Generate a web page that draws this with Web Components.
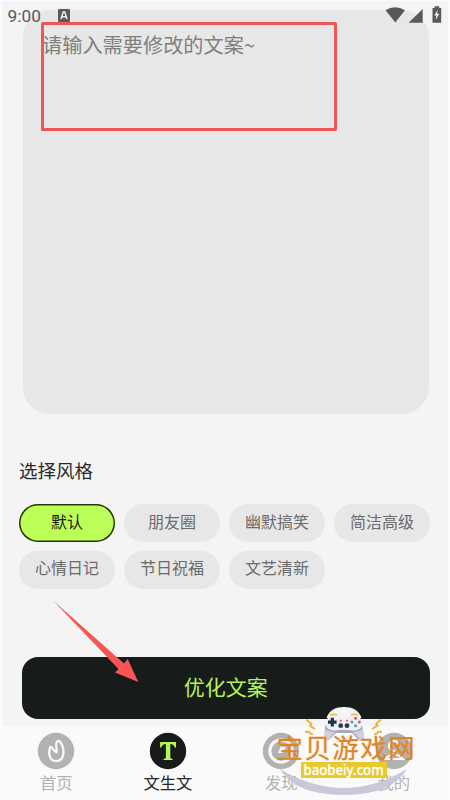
<!DOCTYPE html>
<html lang="zh-CN"><head><meta charset="utf-8"><title>文生文</title>
<style>html,body{margin:0;padding:0;overflow:hidden}body{font-family:"Noto Sans CJK SC","Noto Sans",sans-serif;width:450px;height:800px}</style></head>
<body><copy-app></copy-app>
<script>
const def=(name,html)=>{const t=document.createElement('template');t.innerHTML=html;
customElements.define(name,class extends HTMLElement{constructor(){super();this.attachShadow({mode:'open'}).append(t.content.cloneNode(true));}});};

def('status-bar',`<style>:host{display:flex;height:30px;align-items:center;box-sizing:border-box;padding:0 7px 0 7.6px;color:#595959;font:17.3px/30px Roboto,sans-serif}
.t{width:50.4px;height:30px;padding-top:1px}.s{flex:1}svg{display:block;flex:none}</style>
<span class="t">9:00</span><svg width="12" height="13" viewBox="0 0 12 13"><rect width="12" height="13" rx="1.2" fill="#595959"/><path d="M3 10 5.2 3h1.6L9 10M4.1 7.7h3.8" fill="none" stroke="#eee" stroke-width="1.5"/></svg><span class="s"></span>
<svg width="58" height="18" viewBox="0 0 58 18" fill="#595959"><path d="M.5 4.2Q10 -1.8 20 4.2L10.3 16.5Z"/><path d="M37.7 3V16.7H23.6Z"/><path d="M47.5 2h2V.3h4.7V2h2v14.7h-8.7Z"/><path d="m52.6 4-3.3 5.6h2l-.5 4.4 3.5-6.2h-2.1Z" fill="#eee"/></svg>`);

def('text-card',`<style>:host{display:block;box-sizing:border-box;height:404px;border-radius:27px;background:#e7e7e7;color:#7f7f7f;padding:20px 19px;font-size:20.2px;line-height:30px}</style><slot></slot>`);

def('style-chip',`<style>:host{display:flex;align-items:center;justify-content:center;box-sizing:border-box;height:38px;border-radius:19px;background:#e7e7e7;color:#6b6b6b;font-size:16px;line-height:24px;padding-bottom:5px}
:host([active]){background:#bdff59;color:#1a2010;box-shadow:inset 0 0 0 1.5px #26340f}</style><slot></slot>`);

def('primary-button',`<style>:host{display:flex;align-items:center;justify-content:center;height:62px;border-radius:16px;background:#171c1a;color:#b5f457;font-size:21px;line-height:30px;box-sizing:border-box;padding-bottom:4px}</style><slot></slot>`);

def('nav-item',`<style>:host{display:flex;flex-direction:column;align-items:center;width:112.6px;color:#b2b2b2;font-size:16.3px;line-height:24px;padding-top:6px;box-sizing:border-box}
:host([active]){color:#252827;padding-right:1.6px}::slotted(svg){display:block;width:38px;height:38px}</style><slot name="icon"></slot><span><slot></slot></span>`);

def('site-mark',`<style>:host{display:block;width:142px;height:92px;position:relative;color:#e1851f}
svg{position:absolute;inset:0}.n{position:absolute;left:1.6px;top:29px;font-size:26.4px;letter-spacing:1.5px;line-height:26px;white-space:nowrap;-webkit-text-stroke:.3px}
.u{position:absolute;left:26px;top:57px;width:86px;height:16px;background:#e8ca2e;color:#fff;display:flex;justify-content:center;align-items:center;white-space:nowrap}
.u b{flex:none;font:500 15px/14px "Noto Sans",sans-serif;transform:translateY(-1px) scaleX(.88);margin:0 -6px;-webkit-text-stroke:.25px}</style>
<svg width="142" height="92" viewBox="0 0 142 92"><path d="M5 64Q69 102 132 64Q117 90 69 90Q20 90 5 64Z" fill="#c7c8d8"/>
<path d="M51.5 13C54 5 61 2 69 2S84 5 86.5 13Z" fill="#f4f4f4"/>
<path d="M50.5 20Q49 29 50 34Q53 37 58 31L61 28H77L80 31Q85 38 88.5 34Q89 28 87 20Z" fill="#a9a9ba"/>
<path d="M57 34Q62 28 69 28T81 34Z" fill="#fafafa"/>
<path d="M51 19Q51 12 57 11Q61 11 63 13H75Q77 11 81 11Q87 12 87 19Q87 24 82 25Q78 26 75 25H63Q60 26 56 25Q51 24 51 19Z" fill="#eeeef3"/>
<path d="M50.5 24Q49 32 50 35Q53 38 56 32L60 27Q53 27 50.5 24M87.5 24Q90 32 89 35Q86 38 83 32L78 27Q85 27 87.5 24" fill="#d0d0dc"/>
<path d="M57.3 12.8v8.6M53 17.1h8.6" stroke="#193643" stroke-width="3.2"/>
<g fill="#263d4a"><circle cx="65.7" cy="20.7" r="2.4"/><circle cx="72" cy="20.7" r="2.4"/></g><g fill="#dd5260"><circle cx="65.7" cy="15.7" r="1"/><circle cx="72" cy="15.7" r="1"/><circle cx="80.6" cy="13.3" r="1.5"/><circle cx="84.3" cy="17" r="1.5"/></g><g fill="#38a3cc"><circle cx="76.9" cy="17" r="1.5"/><circle cx="80.6" cy="20.7" r="1.5"/></g>
<path d="M55 10.5q4-2 7-.5M76 10q4-1.5 7 .5" fill="none" stroke="#e9b64b" stroke-width="1.5"/>
<g fill="none" stroke="#efaf3c" stroke-width="1.8"><path d="m31.5 14.5 5 4.5-1.5 1.8 5 3.2M30 27l4-.3.8 1.6 3.2 1M106 14.5l-5 4.5 1.5 1.5-5.5 3.5M107 27l-4-.3-.8 1.6-3.2 1"/></g></svg>
<span class="n">宝贝游戏网</span><span class="u"><b>baobeiy.com</b></span>`);

def('mark-overlay',`<style>:host{display:block;position:absolute;top:0;left:-2px;width:450px;height:800px;pointer-events:none}svg{display:block}site-mark{position:absolute;left:275px;top:705px}</style>
<svg width="450" height="800"><rect x="42.5" y="23.5" width="293" height="106" fill="none" stroke="#ec5656" stroke-width="3" stroke-linejoin="round"/><path d="M53 600.5 124 663.5 127.7 659 138.3 682 115 672.5 118.5 669Z" fill="#f95555"/></svg><site-mark></site-mark>`);

def('copy-app',`<style>:host{display:flex;flex-direction:column;position:relative;width:450px;height:800px;background:#f4f4f4;overflow:hidden;box-sizing:border-box;border-left:2px solid #fcfcfc;border-right:2px solid #fcfcfc}
:host::before{content:"";position:absolute;left:0;right:0;top:0;height:1px;background:#fcfcfc}
status-bar{position:absolute;left:-2px;right:-2px;top:0}
main{flex:1;display:flex;flex-direction:column;padding:9.5px 0 0}
text-card{margin:0 19px 0 21px}h2{font-size:18.5px;font-weight:400;line-height:28px;color:#292929;margin:42px 0 0 17px}
.chips{display:grid;grid-template-columns:repeat(4,1fr);gap:8.5px 9.3px;margin:20.5px 18px 0 17px}primary-button{margin:68.5px 18.5px 0 20px}
nav{height:74px;background:#fafafa;display:flex;justify-content:space-between;margin:0 -2px}</style>
<main><text-card>请输入需要修改的文案~</text-card><h2>选择风格</h2>
<section class="chips"><style-chip active>默认</style-chip><style-chip>朋友圈</style-chip><style-chip>幽默搞笑</style-chip><style-chip>简洁高级</style-chip><style-chip>心情日记</style-chip><style-chip>节日祝福</style-chip><style-chip>文艺清新</style-chip></section>
<primary-button>优化文案</primary-button></main>
<nav><nav-item><svg slot="icon" viewBox="0 0 38 38"><circle cx="19" cy="19" r="18.2" fill="#b2b2b2"/><path d="M13.2 15C11 21 12 29 19.3 29.2 28 29 28.5 16 22.5 9 20.5 8.5 18.8 10.5 19.2 13.5Q19.8 17 19.7 20.5 17.5 19.5 16 17 14.5 14.5 13.2 15Z" fill="none" stroke="#fafafa" stroke-width="2.2" stroke-linejoin="round"/></svg>首页</nav-item>
<nav-item active><svg slot="icon" viewBox="0 0 38 38"><circle cx="19" cy="19" r="18.2" fill="#171c1a"/><path d="M11.1 10H27V15.5H25.7Q25 12 21.3 12V25.5Q21.3 26.7 23.6 27V28H14.5V27Q16.9 26.7 16.9 25.5V12Q13 12 12.4 15.5H11.1Z" fill="#b5f457"/></svg>文生文</nav-item>
<nav-item><svg slot="icon" viewBox="0 0 38 38"><circle cx="19" cy="19" r="18.2" fill="#b2b2b2"/><circle cx="19" cy="19" r="11.2" fill="none" stroke="#fafafa" stroke-width="3"/><path d="m16 21 3-7 5 1-3 6Z" fill="#fafafa"/></svg>发现</nav-item>
<nav-item><svg slot="icon" viewBox="0 0 38 38"><circle cx="19" cy="19" r="18.2" fill="#b2b2b2"/><circle cx="19" cy="14" r="5" fill="none" stroke="#fafafa" stroke-width="2"/><path d="M10 27q9-9 18 0Z" fill="none" stroke="#fafafa" stroke-width="2"/></svg>我的</nav-item></nav>
<status-bar></status-bar><mark-overlay></mark-overlay>`);
</script></body></html>
